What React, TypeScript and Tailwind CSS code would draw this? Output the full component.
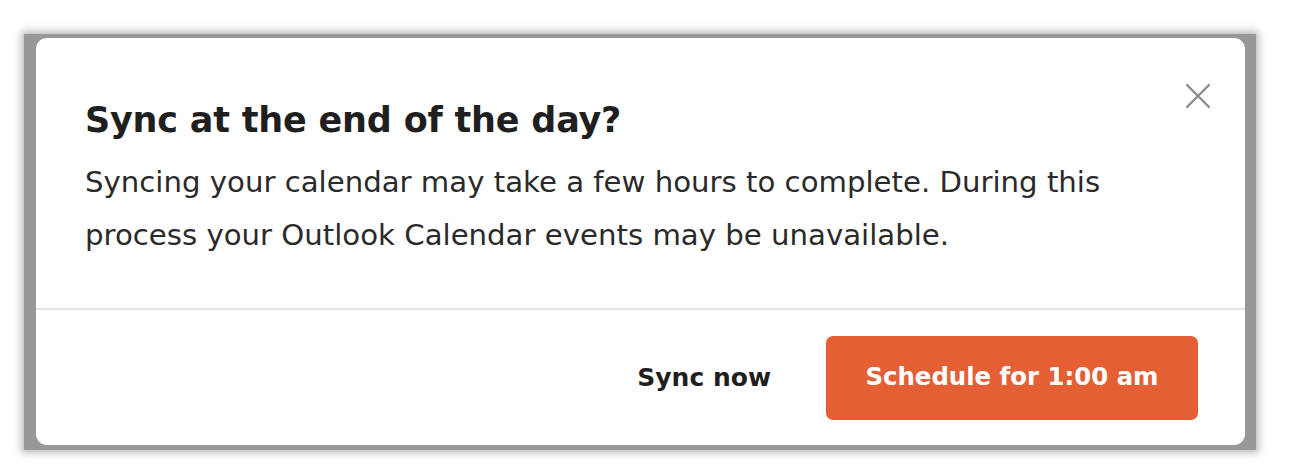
import React from "react";

export default function App() {
  return (
    <div className="w-[1300px] h-[476px] bg-white pl-[24px] pt-[34px] font-['DejaVu_Sans',sans-serif]">
      <div className="w-[1232px] h-[416px] bg-[#989898] pl-[12px] pr-[11px] pt-[4px] pb-[5px] shadow-[0_0_7px_3px_rgba(155,155,155,0.65)]">
        <div className="relative flex flex-col h-full w-full bg-white rounded-[11px]">
          <button className="absolute right-[34px] top-[45px] w-[26px] h-[26px] text-[#8c8c8c]">
            <svg viewBox="0 0 26 26" className="w-[26px] h-[26px]" fill="none" stroke="currentColor" strokeWidth="2.4" strokeLinecap="round">
              <path d="M2 2 L24 24 M24 2 L2 24" />
            </svg>
          </button>
          <div className="pl-[49px] pr-[120px] pt-[60px] pb-[46px] border-b-2 border-[#e3e3e3]">
            <h2 className="text-[35px] leading-[44px] font-bold text-[#1f1f1f] tracking-[-0.2px]">
              Sync at the end of the day?
            </h2>
            <p className="mt-[14px] text-[29.2px] leading-[53px] text-[#2a2a2a] w-[1060px]">
              Syncing your calendar may take a few hours to complete. During this process your Outlook Calendar events may be unavailable.
            </p>
          </div>
          <div className="flex flex-1 items-center justify-end gap-[55px] pr-[47px]">
            <button className="text-[25px] font-bold text-[#1f1f1f]">Sync now</button>
            <button className="w-[372px] h-[84px] rounded-[7px] bg-[#e55f35] text-white text-[24.4px] font-bold">
              Schedule for 1:00 am
            </button>
          </div>
        </div>
      </div>
    </div>
  );
}
